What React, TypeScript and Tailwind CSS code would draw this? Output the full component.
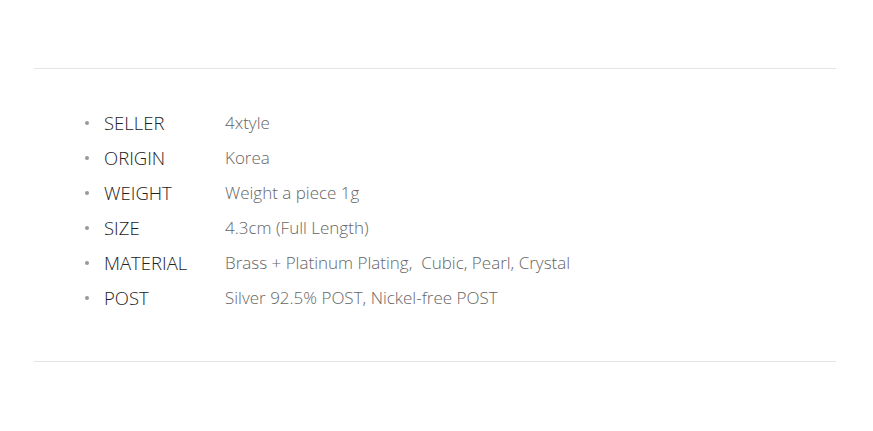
import React from "react";

const rows: [string, string][] = [
  ["SELLER", "4xtyle"],
  ["ORIGIN", "Korea"],
  ["WEIGHT", "Weight a piece 1g"],
  ["SIZE", "4.3cm (Full Length)"],
  ["MATERIAL", "Brass + Platinum Plating,\u00a0 Cubic, Pearl, Crystal"],
  ["POST", "Silver 92.5% POST, Nickel-free POST"],
];

export default function App() {
  return (
    <div className="w-[873px] h-[431px] bg-white pl-[34px] pr-[37px] pt-[68px]" style={{ fontFamily: '"Open Sans", sans-serif' }}>
      <div className="border-t border-b border-[#e5e5e5] pt-[36px] pb-[46px]">
        <ul className="pl-[51px]">
          {rows.map(([k, v]) => (
            <li key={k} className="flex items-center h-[35px]">
              <span className="w-[4px] h-[4px] rounded-full bg-[#999] mr-[15px]" />
              <span className="w-[121px] text-[#222] font-light text-[18.5px]">{k}</span>
              <span className="text-[#666] font-light text-[17px]">{v}</span>
            </li>
          ))}
        </ul>
      </div>
    </div>
  );
}
